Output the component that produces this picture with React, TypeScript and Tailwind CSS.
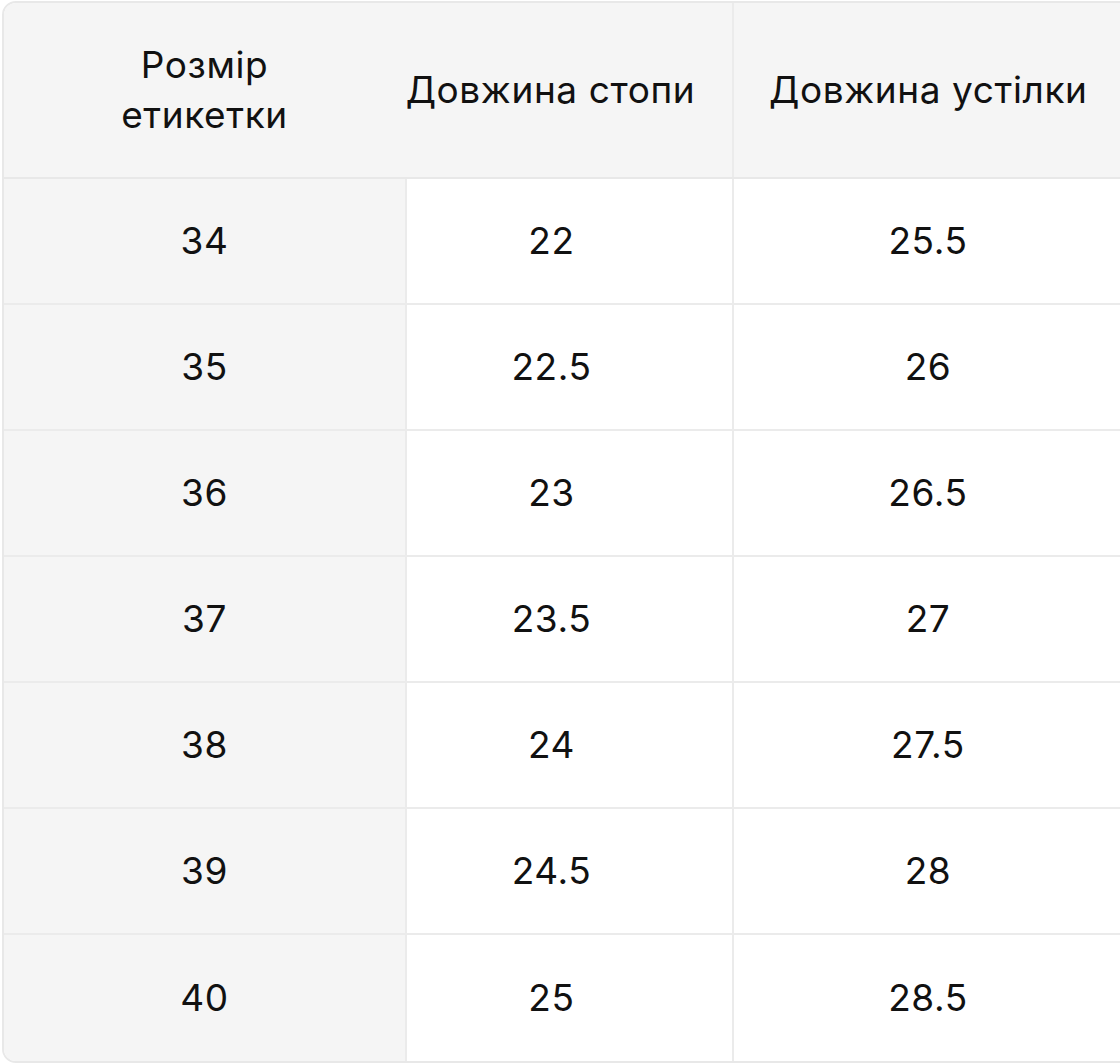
import React from 'react';

const ROWS: [string, string, string][] = [
  ['34', '22', '25.5'],
  ['35', '22.5', '26'],
  ['36', '23', '26.5'],
  ['37', '23.5', '27'],
  ['38', '24', '27.5'],
  ['39', '24.5', '28'],
  ['40', '25', '28.5'],
];

export default function App() {
  return (
    <div className="w-[1120px] h-[1063px] overflow-hidden bg-white" style={{ fontFamily: 'Inter, "Noto Sans", sans-serif' }}>
      <div className="ml-[2px] mt-px w-[1140px] border-2 border-[#e8e8e8] rounded-l-[14px] overflow-hidden text-[#111]">
        {/* header */}
        <div className="grid grid-cols-[401px_327px_1fr] h-[176px] bg-[#f5f5f5] border-b-2 border-[#e8e8e8] text-[37px] leading-[50px] tracking-[0.6px]">
          <div className="flex items-center justify-center text-center">
            Розмір
            <br />
            етикетки
          </div>
          <div className="flex items-center justify-center pr-[36px]">Довжина стопи</div>
          <div className="flex items-center border-l-2 border-[#ebebeb] pl-[35px]">Довжина устілки</div>
        </div>
        {/* rows */}
        {ROWS.map((r, i) => (
          <div
            key={r[0]}
            className={`grid grid-cols-[401px_327px_1fr] h-[126px] text-[37px] tracking-[0.6px] ${i < ROWS.length - 1 ? 'border-b-2 border-[#ebebeb]' : ''}`}
          >
            <div className="flex items-center justify-center bg-[#f5f5f5]">{r[0]}</div>
            <div className="flex items-center justify-center border-l-2 border-[#ebebeb] pr-[36px]">{r[1]}</div>
            <div className="flex items-center justify-center border-l-2 border-[#ebebeb] pr-[18px]">{r[2]}</div>
          </div>
        ))}
      </div>
    </div>
  );
}
